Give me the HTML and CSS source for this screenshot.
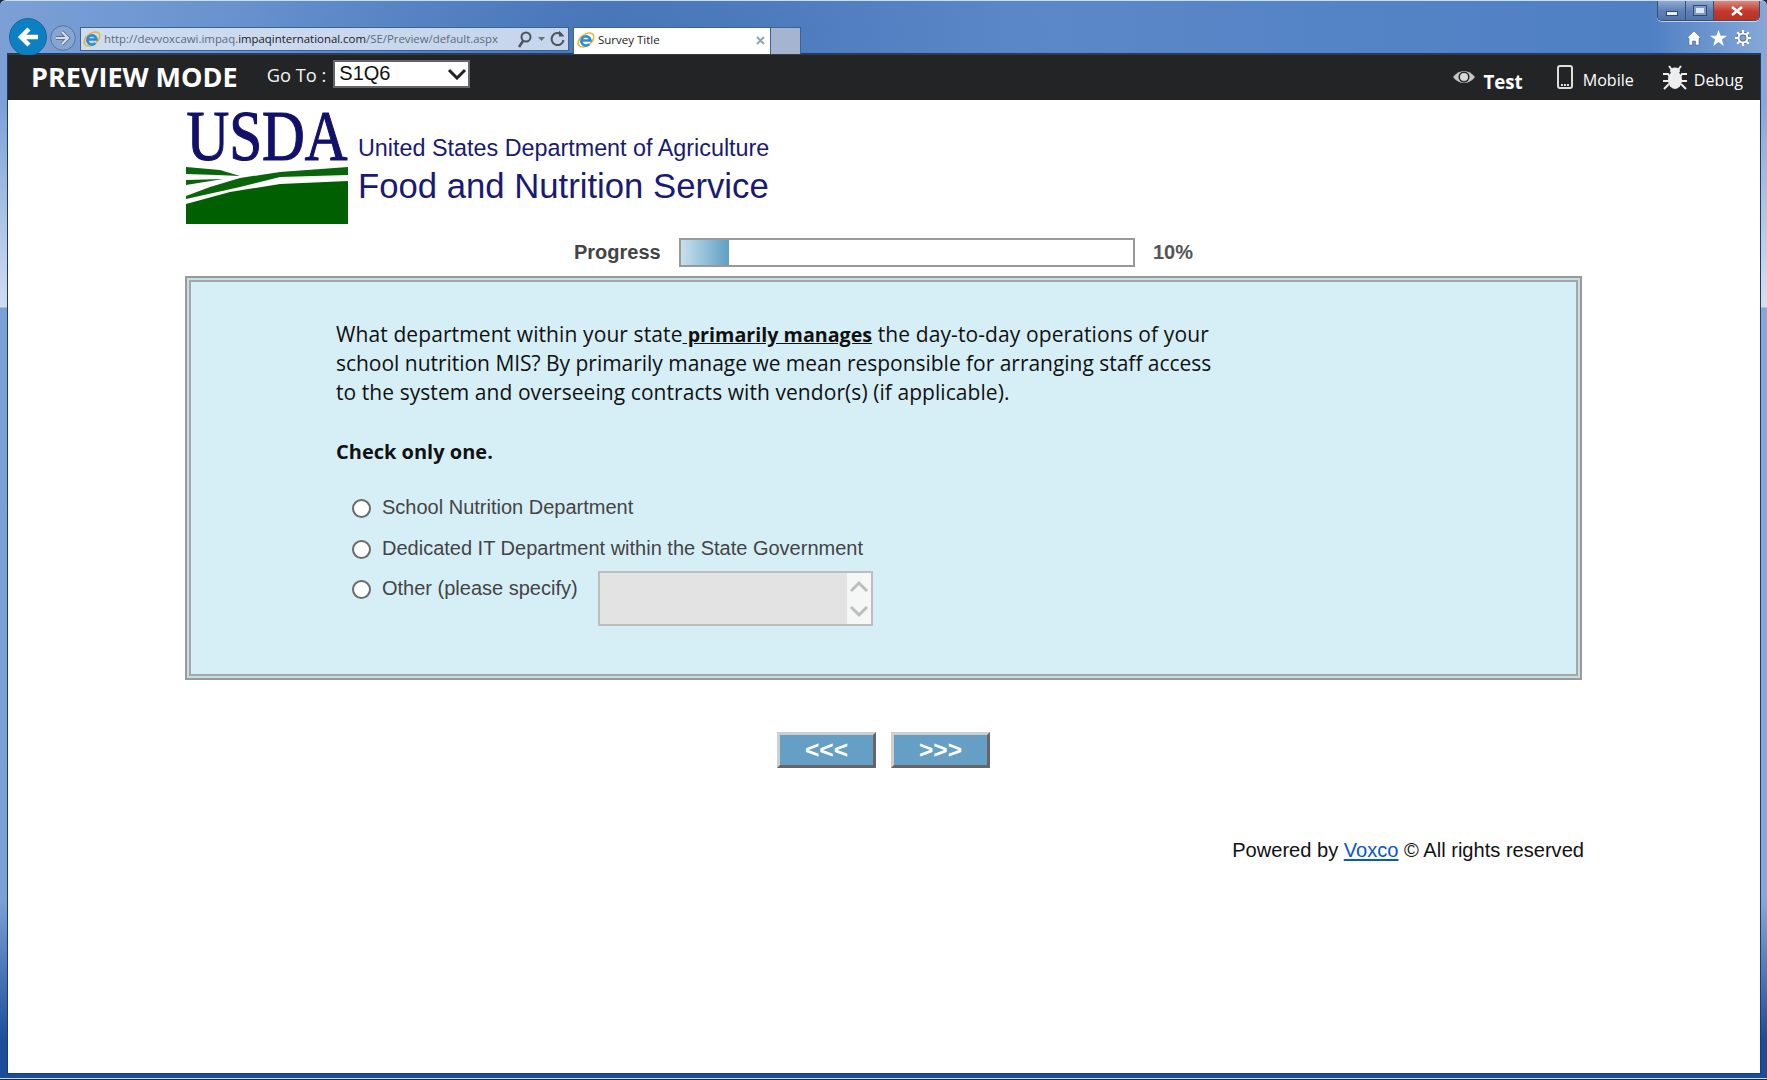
FILE: index.html
```html
<!DOCTYPE html>
<html lang="en">
<head>
<meta charset="utf-8">
<title>Survey Title</title>
<link rel="stylesheet" href="styles.css">
</head>
<body>
<div class="window">
  <div class="chrome">
    <svg class="nav-back" width="40" height="38" viewBox="0 0 40 38"><circle cx="20" cy="20" r="18.500" fill="#0b80c2" stroke="#2a5f98"/><path d="M30 20H14M21 12l-8 8 8 8" fill="none" stroke="#fff" stroke-width="4.500"/></svg>
    <svg class="nav-fwd" width="26" height="26" viewBox="0 0 26 26"><circle cx="13" cy="13" r="12.300" fill="#86a5d3" stroke="#56749f"/><path d="M6 13h11M12 7l6 6-6 6" fill="none" stroke="#5b7290" stroke-width="4"/><path d="M6 13h11M12 7l6 6-6 6" fill="none" stroke="#d4deea" stroke-width="2.200"/></svg>
    <div class="address">
      <svg class="ie" width="20" height="20" viewBox="0 0 20 20"><ellipse cx="10" cy="10" rx="9" ry="5.500" transform="rotate(-38 10 10)" fill="none" stroke="#eeb32c" stroke-width="1.600"/><path d="M5.500 10.500h9a4.600 4.600 0 1 0-1.300 3.700" fill="none" stroke="#2a8cdc" stroke-width="2.600"/></svg>
      <span class="url">http://devvoxcawi.impaq.<b>impaqinternational.com</b>/SE/Preview/default.aspx</span>
      <svg class="addr-tools" width="50" height="18" viewBox="0 0 50 18"><circle cx="9" cy="7" r="4.500" fill="none" stroke="#4a5360" stroke-width="2"/><path d="M6 11l-4 6" stroke="#4a5360" stroke-width="2.500"/><path d="M21 7h7l-3.500 4z" fill="#66707e"/><path d="M45 5a6 6 0 1 0 1.500 5" fill="none" stroke="#4a5360" stroke-width="2"/><path d="M42 0.500v6h5.500z" fill="#4a5360"/></svg>
    </div>
    <div class="tab">
      <svg width="20" height="20" viewBox="0 0 20 20"><ellipse cx="10" cy="10" rx="9" ry="5.500" transform="rotate(-38 10 10)" fill="none" stroke="#eeb32c" stroke-width="1.600"/><path d="M5.500 10.500h9a4.600 4.600 0 1 0-1.300 3.700" fill="none" stroke="#2a8cdc" stroke-width="2.600"/></svg>
      <span class="tab-title">Survey Title</span>
      <svg class="tab-close" width="9" height="9" viewBox="0 0 9 9"><path d="M1 1l7 7M8 1l-7 7" stroke="#9aa3ad" stroke-width="2"/></svg>
    </div>
    <div class="newtab"></div>
    <div class="chrome-right">
      <div class="winctl">
        <div class="ctl"><i class="min"></i></div>
        <div class="ctl"><i class="max"></i></div>
        <div class="ctl close"><svg width="16" height="10" viewBox="0 0 16 10"><path d="M3 1l10 8M13 1L3 9" stroke="#fff" stroke-width="2.600"/></svg></div>
      </div>
      <div class="tools">
        <svg width="16" height="16" viewBox="0 0 16 16"><path d="M8 1L1 8h2v7h3.500v-4h3v4H13V8h2z" fill="#fff" stroke="#3d5c88" stroke-width=".5"/></svg>
        <svg width="17" height="16" viewBox="0 0 18 17"><path d="M9 0l2.300 6H18l-5.400 4 2 7L9 12.800 3.400 17l2-7L0 6h6.700z" fill="#fff"/></svg>
        <svg width="16" height="16" viewBox="0 0 16 16"><circle cx="8" cy="8" r="4.500" fill="none" stroke="#3d5c88" stroke-width="3.400"/><circle cx="8" cy="8" r="4.500" fill="none" stroke="#fff" stroke-width="2.200"/><path d="M8 0v3M8 13v3M0 8h3M13 8h3M2.300 2.300l2 2M11.700 11.700l2 2M13.700 2.300l-2 2M4.300 11.700l-2 2" stroke="#fff" stroke-width="2.200"/></svg>
      </div>
    </div>
  </div>
  <div class="page">
    <header class="previewbar">
      <div class="title">PREVIEW MODE</div>
      <div class="goto">Go To :</div>
      <div class="select"><span>S1Q6</span><svg width="20" height="12" viewBox="0 0 20 12"><path d="M2 2l8 8 8-8" fill="none" stroke="#222" stroke-width="3"/></svg></div>
      <nav class="modes">
        <div class="mode active">
          <svg class="eye" width="24" height="16" viewBox="0 0 24 16"><path d="M1 8c6-8 16-8 22 0-6 8-16 8-22 0z" fill="#c4c4c4"/><circle cx="12" cy="8" r="5.500" fill="#232426"/><circle cx="12" cy="8" r="4" fill="#d8d8d8"/></svg>
          <span>Test</span>
        </div>
        <div class="mode">
          <svg class="phone" width="16" height="24" viewBox="0 0 16 24"><rect x="1" y="1" width="14" height="22" rx="2" fill="none" stroke="#ddd" stroke-width="2"/><path d="M4 20h8" stroke="#ddd" stroke-width="2" stroke-dasharray="2 1"/></svg>
          <span>Mobile</span>
        </div>
        <div class="mode">
          <svg class="bug" width="24" height="25" viewBox="0 0 24 25"><ellipse cx="12" cy="15" rx="7" ry="9" fill="#eee"/><ellipse cx="12" cy="6" rx="5" ry="3.500" fill="#eee"/><path d="M6 1l3 4M18 1l-3 4M0 9h5l2 3M24 9h-5l-2 3M0 16h6M24 16h-6M1 24l5-5M23 24l-5-5" stroke="#eee" stroke-width="2" fill="none"/></svg>
          <span>Debug</span>
        </div>
      </nav>
    </header>
    <main class="content">
      <div class="brand">
        <svg class="logo" width="162" height="130" viewBox="0 -18 162 130">
          <text class="usda" x="0.500" y="47" transform="scale(.822 1)">USDA</text>
          <path d="M0 54l34 3 20 6-23-1-31-1z" fill="#0a640a"/>
          <path d="M0 67l37-1-37 6z" fill="#0a640a"/>
          <path d="M0 83l24-9 30-9 40-6 68-5v8l-68 2-40 10-54 12z" fill="#0a640a"/>
          <path d="M0 91l44-12 50-8 68-3v43H0z" fill="#005f00"/>
        </svg>
        <div class="agency">
          <div class="agency-dept">United States Department of Agriculture</div>
          <div class="agency-name">Food and Nutrition Service</div>
        </div>
      </div>
      <div class="progress">
        <span class="progress-label">Progress</span>
        <div class="progress-track"><div class="progress-fill"></div></div>
        <span class="progress-value">10%</span>
      </div>
      <section class="panel">
        <p class="question"><span class="line-a">What department within your state<u class="strong"> primarily manages</u> the day-to-day operations of your</span><br><span class="line-b">school nutrition MIS? By primarily manage we mean responsible for arranging staff access</span><br><span class="line-c">to the system and overseeing contracts with vendor(s) (if applicable).</span></p>
        <p class="instruction">Check only one.</p>
        <div class="options">
          <label class="option"><input type="radio" name="q"><span>School Nutrition Department</span></label>
          <label class="option"><input type="radio" name="q"><span>Dedicated IT Department within the State Government</span></label>
          <label class="option"><input type="radio" name="q"><span>Other (please specify)</span>
            <div class="specify">
              <div class="specify-field"></div>
              <div class="specify-scroll">
                <svg width="20" height="12" viewBox="0 0 20 12"><path d="M2 11l8-8 8 8" fill="none" stroke="#bdbdbd" stroke-width="3"/></svg>
                <svg width="20" height="12" viewBox="0 0 20 12"><path d="M2 1l8 8 8-8" fill="none" stroke="#bdbdbd" stroke-width="3"/></svg>
              </div>
            </div>
          </label>
        </div>
      </section>
      <div class="buttons">
        <button class="btn">&lt;&lt;&lt;</button>
        <button class="btn">&gt;&gt;&gt;</button>
      </div>
      <footer class="powered">Powered by <a href="#">Voxco</a> © All rights reserved</footer>
    </main>
  </div>
</div>
</body>
</html>
```
FILE: styles.css
```css
* { box-sizing: border-box; }
html, body { margin: 0; height: 100%; overflow: hidden; }
body { background: #1b2a44; }
.window {
  width: 1767px; height: 1079px;
  display: flex; flex-direction: column;
  padding: 1px 7px 5px 8px;
  border-radius: 6px 6px 0 0;
  background:
    linear-gradient(180deg, transparent 900px, #1c4d9b 1040px),
    linear-gradient(180deg, transparent 100px, rgba(255,255,255,.65) 306px, transparent 307px),
    radial-gradient(ellipse 420px 90px at 640px 30px, rgba(60,110,180,.45), transparent),
    linear-gradient(90deg, #7ba0d6 0, #638fcc 300px, #4f7cbd 600px, #5b88c8 1000px, #4f80c4 1650px, #85a8d8 1767px);
  border-top: 1px solid #cfdcee;
  border-bottom: 1px solid #cdd9e8;
  font-family: "Liberation Sans", Arial, sans-serif;
}
.chrome { height: 52px; flex: none; display: flex; align-items: flex-start; position: relative; }
.nav-back { margin: 15px 0 0 0; flex: none; }
.nav-fwd { margin: 23px 0 0 2px; flex: none; }
.address {
  margin: 25px 0 0 4px; width: 489px; height: 24px; flex: none;
  display: flex; align-items: center; padding: 0 1px 0 1px;
  background: rgba(226,234,246,.82); border: 1px solid #3f6198;
}
.ie { flex: none; }
.url { font: 11.400px "Open Sans", sans-serif; color: #5d6a7c; margin: -1px 0 0 2px; white-space: nowrap; flex: 1; }
.url b { font-weight: 400; color: #1a1a1a; }
.addr-tools { flex: none; }
.tab {
  margin: 25px 0 0 4px; width: 198px; height: 27px; flex: none;
  display: flex; align-items: center; padding: 0 5px 2px 2px;
  background: #fff; border: 1px solid #3f6198; border-bottom: 0;
}
.tab-title { font: 11.500px "Open Sans", sans-serif; color: #222; margin: -1px 0 0 2px; flex: 1; }
.newtab { margin: 25px 0 0 0; width: 30px; height: 27px; background: #a5b5d0; border: 1px solid #3f6198; border-left: 0; border-bottom: 0; flex: none; }
.chrome-right { margin-left: auto; display: flex; flex-direction: column; align-items: flex-end; }
.winctl {
  width: 103px; height: 20px; display: flex; margin-top: -1px;
  border: 1px solid #3a4f70; border-top: 0; border-radius: 0 0 5px 5px; overflow: hidden;
  box-shadow: 0 1px 0 rgba(255,255,255,.6);
}
.ctl {
  width: 28px; display: flex; align-items: center; justify-content: center;
  background: linear-gradient(#8fabd1, #5f82b5 50%, #4f74ab);
  border-right: 1px solid #3a4f70;
}
.ctl.close { flex: 1; border: 0; background: linear-gradient(#d98a7f, #c2392a 55%, #b73325); }
.min { display: block; width: 12px; height: 5px; margin-top: 5px; background: #e8eef6; border: 1px solid #33486a; }
.max { display: block; width: 14px; height: 11px; border: 1px solid #33486a; background: #dfe7f2; box-shadow: inset 0 0 0 2px #7f9cc6; }
.tools { display: flex; align-items: center; gap: 8px; margin: 9px 9px 0 0; }
.page { flex: 1; display: flex; flex-direction: column; background: #fff; box-shadow: 0 0 0 1px #1c3a6b; }
.previewbar {
  height: 46px; flex: none; display: flex; align-items: center;
  background: #232426; color: #fff; padding: 0 17px 0 23px;
  box-shadow: inset 0 1px 0 #3b3c3e;
}
.title { font: 700 27px "Open Sans", sans-serif; margin-top: -2px; white-space: nowrap; }
.goto { font: 400 18.300px "Open Sans", sans-serif; margin: -6px 0 0 29px; color: #f4f4f4; white-space: nowrap; }
.select {
  margin: -7px 0 0 7px; width: 137px; height: 28px; display: flex; align-items: center; justify-content: space-between;
  padding: 0 1px 0 4px; background: #fff; border: 2px solid #666; color: #111; font: 20px "Liberation Sans", sans-serif;
}
.modes { margin-left: auto; display: flex; align-items: center; gap: 29px; }
.mode { display: flex; align-items: center; gap: 7px; font: 400 16.100px "Open Sans", sans-serif; }
.mode span { margin-top: 6px; }
.mode.active { font-weight: 700; font-size: 18.700px; margin-right: 5px; }
.mode.active span { margin-top: 8px; }
.phone { margin-right: 3px; }
.content { flex: 1; display: flex; flex-direction: column; padding: 11px 178px 0 177px; }
.brand { display: flex; align-items: flex-start; gap: 10px; height: 114px; padding-left: 1px; }
.logo { flex: none; display: block; margin-top: -16px; }
.usda { font: 400 72px "Liberation Serif", serif; fill: #11116b; stroke: #11116b; stroke-width: 1.200px; }
.agency { color: #1a1a72; padding-top: 22px; white-space: nowrap; }
.agency-dept { font-size: 23.350px; line-height: 30px; }
.agency-name { font-size: 34.700px; line-height: 46px; }
.progress { display: flex; align-items: center; margin: 12px 0 0 389px; height: 31px; color: #444; }
.progress-label { font-size: 20px; font-weight: 700; width: 105px; }
.progress-track { width: 456px; height: 29px; border: 2px solid #999; background: #fff; }
.progress-fill { width: 10.600%; height: 100%; background: linear-gradient(90deg, #c9e0ec, #5f9fc4); }
.progress-value { font-size: 20px; font-weight: 700; margin-left: 18px; color: #555; }
.panel {
  margin-top: 8px; height: 404px; flex: none;
  background: #d6eff7; border: 2px solid #9a9a9a;
  box-shadow: inset 0 0 0 2px #c4e0e6, inset 0 0 0 4px #a6a6a6;
  padding: 42px 0 0 149px;
}
.question, .instruction { margin: 0; font: 400 21px/29px "Open Sans", sans-serif; color: #111; }
.line-a { letter-spacing: .1px; }
.line-b { letter-spacing: -.026px; }
.line-c { letter-spacing: .065px; }
.strong { font-weight: 700; font-size: 19.700px; letter-spacing: 0; }
.instruction { font-size: 20px; font-weight: 700; margin-top: 30px; }
.options { margin: 23px 0 0 16px; color: #444; font-size: 20px; }
.option { display: flex; align-items: flex-start; height: 40.500px; }
.option input {
  appearance: none; width: 19px; height: 19px; margin: 10px 0 0 0; flex: none;
  border: 2px solid #6a6a6a; border-radius: 50%; background: #fff;
}
.option span { margin: 6px 0 0 11px; line-height: 24px; }
.specify { display: flex; width: 275px; height: 55px; margin: 1px 0 0 20px; border: 2px solid #bdbdbd; flex: none; }
.specify-field { flex: 1; background: #e3e3e3; }
.specify-scroll { width: 24px; background: #f5f6f6; display: flex; flex-direction: column; align-items: center; padding-top: 7px; gap: 14px; }
.buttons { display: flex; justify-content: center; gap: 15px; margin: 52px 0 0 0; }
.btn {
  width: 99px; height: 36px; padding: 0; background: #659fc5; color: #fff;
  border: 3px solid; border-color: #cfcfcf #666 #666 #cfcfcf;
  font: 700 24.500px/1 "Liberation Sans", sans-serif;
}
.powered { margin-top: 70px; text-align: right; font-size: 20.080px; color: #111; line-height: 24px; margin-right: -2px; }
.powered a { color: #0b57c4; }
```
